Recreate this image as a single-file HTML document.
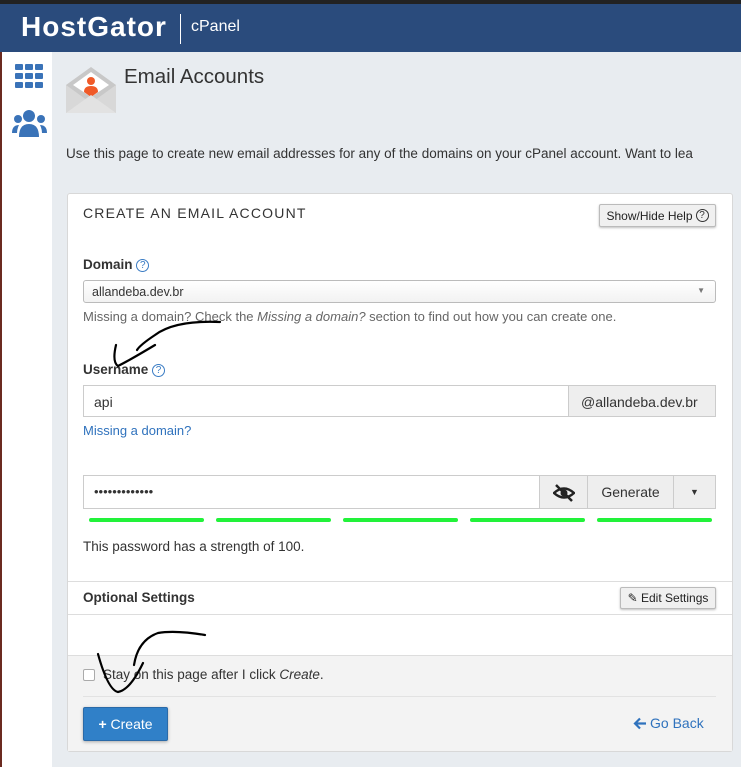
<!DOCTYPE html><html><head><style>
*{box-sizing:border-box;margin:0;padding:0}
body{width:741px;height:767px;overflow:hidden;background:#e8ecf0;font-family:"Liberation Sans",sans-serif;font-size:13px;color:#333;position:relative}
.a{position:absolute}
.btn{position:absolute;background:#f0f0f0;border:1px solid #bbb;border-radius:2px;box-shadow:0 1px 2px rgba(0,0,0,.25);font-size:12px;color:#222;display:flex;align-items:center;justify-content:center}
.q{display:inline-block;width:13px;height:13px;border:1.3px solid #3a7cc4;border-radius:50%;color:#3a7cc4;font-size:10px;line-height:11px;text-align:center;font-weight:normal;vertical-align:1px}
.bar{position:absolute;top:518px;height:4px;background:#22f23a;border-radius:2px;width:115px}
</style></head><body>
<div class="a" style="left:0;top:0;width:741px;height:4px;background:#222"></div>
<div class="a" style="left:0;top:4px;width:741px;height:48px;background:#2a4b7c"></div>
<div class="a" style="left:21px;top:11px;color:#fff;font-weight:bold;font-size:28px;letter-spacing:1px">HostGator</div>
<div class="a" style="left:180px;top:14px;width:1px;height:30px;background:#fff"></div>
<div class="a" style="left:191px;top:18px;color:#fff;font-size:16px">cPanel</div>
<div class="a" style="left:0;top:52px;width:52px;height:715px;background:#fff;border-left:2px solid #6b2a20"></div>
<svg class="a" style="left:15px;top:64px" width="29" height="25"><g fill="#3a73b8"><rect x="0" y="0" width="8" height="6" rx="1"/><rect x="10" y="0" width="8" height="6" rx="1"/><rect x="20" y="0" width="8" height="6" rx="1"/><rect x="0" y="9" width="8" height="6" rx="1"/><rect x="10" y="9" width="8" height="6" rx="1"/><rect x="20" y="9" width="8" height="6" rx="1"/><rect x="0" y="18" width="8" height="6" rx="1"/><rect x="10" y="18" width="8" height="6" rx="1"/><rect x="20" y="18" width="8" height="6" rx="1"/></g></svg>
<svg class="a" style="left:11px;top:110px" width="37" height="27"><g fill="#3a73b8"><circle cx="18" cy="6" r="6"/><circle cx="7" cy="9" r="4"/><circle cx="30" cy="9" r="4"/><path d="M8 27 Q8 14 18 14 Q28 14 28 27Z"/><path d="M1 23 Q1 15 8 15 Q6 19 6 23Z"/><path d="M36 23 Q36 15 29 15 Q31 19 31 23Z"/></g></svg>
<svg class="a" style="left:66px;top:65px" width="50" height="48"><path d="M0 20 L25 2 L50 20 L50 48 L0 48Z" fill="#c8c8c8"/><path d="M7 20 L25 7 L43 20 L25 32Z" fill="#fff"/><circle cx="25" cy="16" r="4" fill="#f05a28"/><path d="M18 27 Q18 21 25 21 Q32 21 32 27 L25 32Z" fill="#f05a28"/><path d="M0 20 L25 38 L50 20 L50 48 L0 48Z" fill="#d8d8d8"/><path d="M0 48 L25 30 L50 48Z" fill="#e2e2e2"/></svg>
<div class="a" style="left:124px;top:65px;font-size:20.5px;color:#333">Email Accounts</div>
<div class="a" style="left:66px;top:146px;font-size:13.5px;white-space:nowrap">Use this page to create new email addresses for any of the domains on your cPanel account. Want to lea</div>
<div class="a" style="left:67px;top:193px;width:666px;height:559px;background:#fff;border:1px solid #d8d8d8;border-radius:3px"></div>
<div class="a" style="left:83px;top:205px;font-size:14px;letter-spacing:1.2px;color:#333">CREATE AN EMAIL ACCOUNT</div>
<div class="btn" style="left:599px;top:204px;width:117px;height:23px">Show/Hide Help <span class="q" style="color:#333;border-color:#333;margin-left:3px">?</span></div>
<div class="a" style="left:83px;top:257px;font-weight:bold;font-size:13.5px">Domain <span class="q">?</span></div>
<div class="a" style="left:83px;top:280px;width:633px;height:23px;border:1px solid #bbb;border-radius:3px;background:linear-gradient(#fff,#f2f2f2);padding:4px 8px;font-size:12.5px">allandeba.dev.br<span style="position:absolute;right:10px;top:5px;font-size:8px;color:#777">▼</span></div>
<div class="a" style="left:83px;top:309px;color:#666;font-size:13px">Missing a domain? Check the <i>Missing a domain?</i> section to find out how you can create one.</div>
<div class="a" style="left:83px;top:362px;font-weight:bold;font-size:13.5px">Username <span class="q">?</span></div>
<div class="a" style="left:83px;top:385px;width:486px;height:32px;border:1px solid #ccc;border-right:none;padding:8px 10px;font-size:14px">api</div>
<div class="a" style="left:568px;top:385px;width:148px;height:32px;border:1px solid #ccc;background:#eee;padding:8px 12px;font-size:14px">@allandeba.dev.br</div>
<div class="a" style="left:83px;top:423px;color:#2f72bd;font-size:13px">Missing a domain?</div>
<div class="a" style="left:83px;top:475px;width:457px;height:34px;border:1px solid #ccc;padding:8px 10px;font-size:13px">•••••••••••••</div>
<div class="a" style="left:539px;top:475px;width:49px;height:34px;border:1px solid #ccc;background:#eee"><svg style="position:absolute;left:13px;top:8px" width="22" height="18"><path d="M1 9 Q11 0 21 9 Q11 18 1 9Z" fill="none" stroke="#222" stroke-width="2.5"/><circle cx="11" cy="9" r="3.5" fill="#222"/><path d="M3 1 L19 17" stroke="#222" stroke-width="2.5"/></svg></div>
<div class="a" style="left:587px;top:475px;width:87px;height:34px;border:1px solid #ccc;background:#eee;font-size:14px;text-align:center;padding-top:8px">Generate</div>
<div class="a" style="left:673px;top:475px;width:43px;height:34px;border:1px solid #ccc;background:#eee;font-size:9px;text-align:center;padding-top:11px">▼</div>
<div class="bar" style="left:89px"></div><div class="bar" style="left:216px"></div><div class="bar" style="left:343px"></div><div class="bar" style="left:470px"></div><div class="bar" style="left:597px"></div>
<div class="a" style="left:83px;top:539px;font-size:13.5px">This password has a strength of 100.</div>
<div class="a" style="left:68px;top:581px;width:664px;height:1px;background:#ddd"></div>
<div class="a" style="left:83px;top:590px;font-weight:bold;font-size:13.5px">Optional Settings</div>
<div class="btn" style="left:620px;top:587px;width:96px;height:22px">✎ Edit Settings</div>
<div class="a" style="left:68px;top:614px;width:664px;height:1px;background:#ddd"></div>
<div class="a" style="left:68px;top:655px;width:664px;height:96px;background:#f3f3f3;border-top:1px solid #ddd"></div>
<div class="a" style="left:83px;top:669px;width:12px;height:12px;border:1px solid #aaa;border-radius:2px;background:#fff"></div>
<div class="a" style="left:103px;top:667px;font-size:13.5px">Stay on this page after I click <i>Create</i>.</div>
<div class="a" style="left:83px;top:696px;width:633px;height:1px;background:#e2e2e2"></div>
<div class="a" style="left:83px;top:707px;width:85px;height:34px;background:#3080c8;border:1px solid #2a6aa8;border-radius:2px;box-shadow:0 1px 3px rgba(0,0,0,.3);color:#fff;font-size:14px;text-align:center;padding-top:8px"><b>+</b> Create</div>
<svg class="a" style="left:633px;top:717px" width="14" height="13"><path d="M13 6.5 H2 M7 1.5 L2 6.5 L7 11.5" fill="none" stroke="#2f72bd" stroke-width="2.2"/></svg>
<div class="a" style="left:650px;top:715px;color:#2f72bd;font-size:14px">Go Back</div>
<svg class="a" style="left:0;top:0" width="741" height="767"><g fill="none" stroke="#000" stroke-width="2.2" stroke-linecap="round"><path d="M220 322 Q175 320 155 335 Q140 345 137 350"/><path d="M116 345 Q112 362 118 366 Q130 360 155 345"/><path d="M205 635 Q175 630 158 633 Q138 640 134 665"/><path d="M98 654 Q108 690 118 692 Q130 690 143 663"/></g></svg>
</body></html>
